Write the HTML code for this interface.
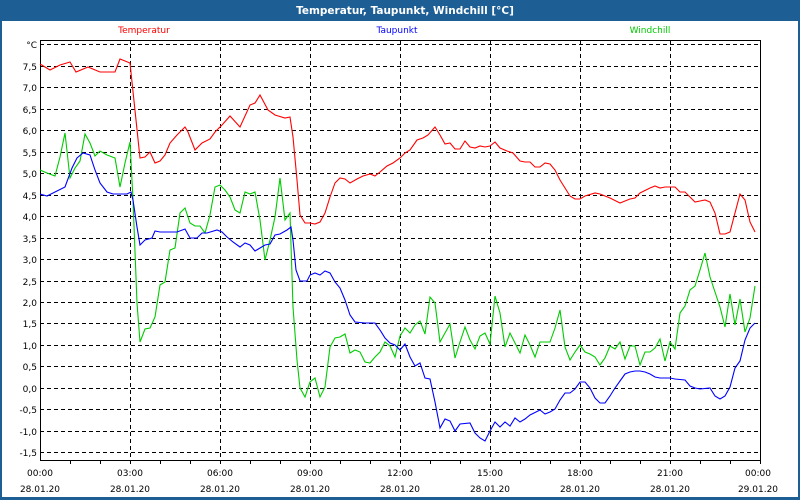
<!DOCTYPE html>
<html><head><meta charset="utf-8"><style>
html,body{margin:0;padding:0;width:800px;height:500px;overflow:hidden;background:#1d5e95;}
svg{display:block;font-family:"DejaVu Sans","Liberation Sans",sans-serif;}
</style></head><body>
<svg width="800" height="500" viewBox="0 0 800 500" xmlns="http://www.w3.org/2000/svg">
<rect x="0" y="0" width="800" height="500" fill="#1d5e95"/>
<rect x="2" y="21" width="796" height="476" fill="#ffffff"/>
<text x="405" y="14" fill="#fff" font-size="10.5" font-weight="bold" text-anchor="middle">Temperatur, Taupunkt, Windchill [°C]</text>
<g font-size="9">
<text x="144" y="33" fill="#ff0000" text-anchor="middle">Temperatur</text>
<text x="397" y="33" fill="#0000ff" text-anchor="middle">Taupunkt</text>
<text x="650" y="33" fill="#00cc00" text-anchor="middle">Windchill</text>
</g>
<g stroke="#000" stroke-width="1" stroke-dasharray="4,3" fill="none">
<path d="M40 44.5H760M40 66.5H760M40 87.5H760M40 109.5H760M40 130.5H760M40 152.5H760M40 173.5H760M40 195.5H760M40 216.5H760M40 238.5H760M40 259.5H760M40 281.5H760M40 302.5H760M40 323.5H760M40 345.5H760M40 366.5H760M40 388.5H760M40 409.5H760M40 431.5H760M40 452.5H760"/>
<path d="M130.5 40V460M220.5 40V460M310.5 40V460M400.5 40V460M490.5 40V460M580.5 40V460M670.5 40V460"/>
</g>
<path d="M40.5 40.5H760.5V460.5H40.5Z" stroke="#000" fill="none"/>
<path d="M70.5 460v4M100.5 460v4M130.5 460v4M160.5 460v4M190.5 460v4M220.5 460v4M250.5 460v4M280.5 460v4M310.5 460v4M340.5 460v4M370.5 460v4M400.5 460v4M430.5 460v4M460.5 460v4M490.5 460v4M520.5 460v4M550.5 460v4M580.5 460v4M610.5 460v4M640.5 460v4M670.5 460v4M700.5 460v4M730.5 460v4M760.5 460v4" stroke="#000"/>
<g font-size="9" fill="#000" text-anchor="end">
<text x="37" y="48">°C</text>
<text x="37" y="70">7,5</text><text x="37" y="91">7,0</text><text x="37" y="113">6,5</text><text x="37" y="134">6,0</text>
<text x="37" y="156">5,5</text><text x="37" y="177">5,0</text><text x="37" y="199">4,5</text><text x="37" y="220">4,0</text>
<text x="37" y="242">3,5</text><text x="37" y="263">3,0</text><text x="37" y="285">2,5</text><text x="37" y="306">2,0</text>
<text x="37" y="327">1,5</text><text x="37" y="349">1,0</text><text x="37" y="370">0,5</text><text x="37" y="392">0,0</text>
<text x="37" y="413">-0,5</text><text x="37" y="435">-1,0</text><text x="37" y="456">-1,5</text>
</g>
<g font-size="9" fill="#000" text-anchor="middle">
<text x="40" y="476">00:00</text><text x="40" y="492">28.01.20</text>
<text x="130" y="476">03:00</text><text x="130" y="492">28.01.20</text>
<text x="220" y="476">06:00</text><text x="220" y="492">28.01.20</text>
<text x="310" y="476">09:00</text><text x="310" y="492">28.01.20</text>
<text x="400" y="476">12:00</text><text x="400" y="492">28.01.20</text>
<text x="490" y="476">15:00</text><text x="490" y="492">28.01.20</text>
<text x="580" y="476">18:00</text><text x="580" y="492">28.01.20</text>
<text x="670" y="476">21:00</text><text x="670" y="492">28.01.20</text>
<text x="758" y="476">00:00</text><text x="758" y="492">29.01.20</text>
</g>
<g fill="none" stroke-width="1.1">
<polyline stroke="#00cc00" points="40,170 47,173 55,176 60,157 65,133 70,178 75,168 80,161 85,134 90,143 95,156 100,151 107,155 115,158 120,187 125,163 130,142 133,200 137,303 140,342 145,329 150,328 155,317 160,285 165,282 170,250 175,248 180,213 185,208 190,223 195,226 200,226 205,233 210,215 215,187 220,185 225,190 230,197 235,210 240,213 245,192 250,194 255,192 260,220 265,260 270,240 275,217 280,178 285,220 290,213 293,307 297,360 300,388 305,397 310,382 315,378 320,397 325,387 330,347 335,338 340,337 345,334 350,353 355,350 360,352 365,362 370,363 375,357 380,352 385,342 390,346 395,357 400,336 405,328 410,333 415,325 420,321 425,334 430,297 435,303 440,342 445,333 450,324 455,358 460,342 465,327 470,340 475,349 480,336 485,333 490,344 495,296 500,313 505,347 510,333 515,343 520,353 525,335 530,345 535,357 540,342 550,342 555,328 560,310 565,347 570,360 575,352 580,345 585,352 590,354 595,357 600,365 605,358 610,346 615,349 620,342 625,359 630,346 635,346 640,365 645,352 650,352 655,348 660,339 665,361 670,342 675,349 680,313 685,306 690,290 695,286 700,270 705,253 710,277 715,292 720,307 725,327 730,294 735,325 740,299 745,332 750,318 755,286"/>
<polyline stroke="#0000ff" points="40,194 47,196 53,193 65,187 72,168 77,158 83,153 90,155 95,170 100,183 107,192 113,194 127,194 131,192 133,200 137,227 140,245 145,240 152,238 155,231 160,232 177,232 185,229 190,238 197,238 202,233 207,233 217,230 222,232 227,237 233,242 240,247 245,243 250,245 255,251 260,248 265,245 270,244 275,235 280,234 287,230 291,227 293,240 296,270 300,281 307,281 310,275 315,273 320,275 325,271 330,273 335,282 340,288 345,300 350,315 355,322 365,323 375,323 380,330 385,338 390,343 395,345 400,350 405,344 410,357 415,366 420,363 425,378 430,379 435,402 440,428 445,419 450,421 455,431 460,424 470,423 475,433 480,438 485,441 490,431 495,422 500,427 505,422 510,426 515,418 520,422 525,419 530,415 540,410 545,414 550,412 555,409 560,400 565,393 570,393 575,389 580,382 585,382 590,388 595,398 600,403 605,403 610,396 615,388 620,381 625,374 630,372 635,371 640,371 645,372 650,374 655,377 660,378 670,378 675,379 685,380 690,386 695,388 700,389 710,388 715,396 720,399 725,396 730,387 735,368 740,361 745,340 750,328 755,323"/>
<polyline stroke="#ff0000" points="40,64 50,70 60,65 70,62 76,72 88,67 100,72 107,72 115,72 120,59 130,63 140,158 145,157 150,152 155,163 160,161 165,155 170,143 177,135 185,127 188,132 195,150 202,143 210,139 215,132 222,125 230,116 240,127 250,105 255,103 260,95 268,110 275,115 285,118 290,117 293,137 297,180 300,215 305,223 310,223 315,224 320,222 325,213 330,197 335,183 340,178 345,179 350,183 357,179 363,176 370,174 375,176 380,172 387,166 393,163 400,158 405,153 410,150 417,140 423,138 428,135 435,127 440,135 445,144 450,143 455,149 460,149 465,141 470,147 475,148 480,146 485,147 490,146 495,142 500,148 507,151 513,153 520,161 525,162 530,162 535,167 540,167 545,163 550,164 555,170 560,180 565,188 570,196 575,199 580,199 585,196 595,193 600,194 605,196 610,198 620,203 625,201 630,199 635,198 640,193 650,188 655,186 660,188 665,187 675,187 680,192 685,192 690,197 695,202 700,201 705,200 710,202 715,213 720,234 725,234 730,232 735,213 740,194 745,200 750,222 755,232"/>
</g>
</svg>
</body></html>
